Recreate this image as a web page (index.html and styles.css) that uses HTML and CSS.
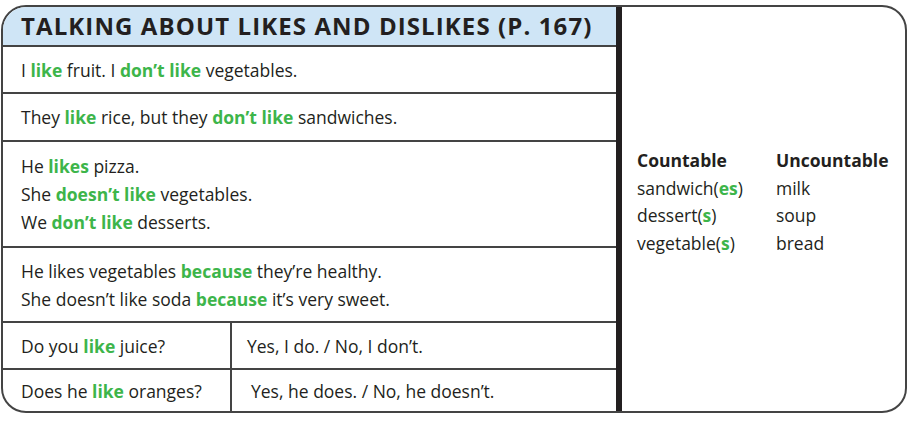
FILE: index.html
```html
<!DOCTYPE html>
<html lang="en">
<head>
<meta charset="utf-8">
<title>Talking about likes and dislikes</title>
<link rel="stylesheet" href="styles.css">
</head>
<body>
<div class="card">
  <div class="left">
    <div class="header"><h1 class="title">Talking about likes and dislikes (p. 167)</h1></div>
    <div class="row r1"><p>I <b>like</b> fruit. I <b>don’t like</b> vegetables.</p></div>
    <div class="row r2"><p>They <b>like</b> rice, but they <b>don’t like</b> sandwiches.</p></div>
    <div class="row r3">
      <p>He <b>likes</b> pizza.</p>
      <p>She <b>doesn’t like</b> vegetables.</p>
      <p>We <b>don’t like</b> desserts.</p>
    </div>
    <div class="row r4">
      <p>He likes vegetables <b>because</b> they’re healthy.</p>
      <p>She doesn’t like soda <b>because</b> it’s very sweet.</p>
    </div>
    <div class="row split r5">
      <div class="cell q"><p>Do you <b>like</b> juice?</p></div>
      <div class="cell a"><p>Yes, I do. / No, I don’t.</p></div>
    </div>
    <div class="row split r6">
      <div class="cell q"><p>Does he <b>like</b> oranges?</p></div>
      <div class="cell a a2"><p>Yes, he does. / No, he doesn’t.</p></div>
    </div>
  </div>
  <div class="bar"></div>
  <div class="right">
    <div class="nouns">
      <span class="hd">Countable</span><span class="hd">Uncountable</span>
      <span>sandwich(<b>es</b>)</span><span>milk</span>
      <span>dessert(<b>s</b>)</span><span>soup</span>
      <span>vegetable(<b>s</b>)</span><span>bread</span>
    </div>
  </div>
</div>
</body>
</html>
```
FILE: styles.css
```css
* { box-sizing: border-box; }
html, body { margin: 0; padding: 0; background: #fff; }
body {
  font-family: "Open Sans", "Liberation Sans", sans-serif;
  color: #231f20;
  font-size: 17.5px;
}
p { margin: 0; }
b { color: #3db54a; font-weight: 700; }

.card {
  margin: 5px 0 0 1px;
  width: 906px;
  height: 408px;
  border: 2px solid #444;
  border-radius: 25px;
  overflow: hidden;
  display: grid;
  grid-template-columns: 613px 6px 1fr;
}
.left {
  display: grid;
  grid-template-rows: 40px 47px 48px 106px 75px 47px 41px;
}
.header {
  background: #cfe5f6;
  border-bottom: 2px solid #444;
  display: flex;
  align-items: center;
  padding-left: 18px;
}
.title {
  margin: 0;
  font-size: 24px;
  font-weight: 700;
  text-transform: uppercase;
  letter-spacing: 1.1px;
  line-height: 1;
  color: #231f20;
}
.row {
  border-bottom: 2px solid #444;
  display: flex;
  flex-direction: column;
  justify-content: center;
  padding-left: 18px;
  line-height: 28px;
}
.r6 { border-bottom: none; }
.split {
  flex-direction: row;
  justify-content: flex-start;
  align-items: stretch;
  padding-left: 0;
}
.cell {
  display: flex;
  align-items: center;
}
.q { flex: 0 0 229px; padding-left: 18px; border-right: 2px solid #444; }
.a { padding-left: 15px; }
.a2 { padding-left: 19px; }
.bar { background: #231f20; }
.right {
  padding: 140px 0 0 15px;
}
.nouns {
  display: grid;
  grid-template-columns: 139px auto;
  line-height: 27.7px;
}
.hd { font-weight: 700; color: #231f20; }
```
